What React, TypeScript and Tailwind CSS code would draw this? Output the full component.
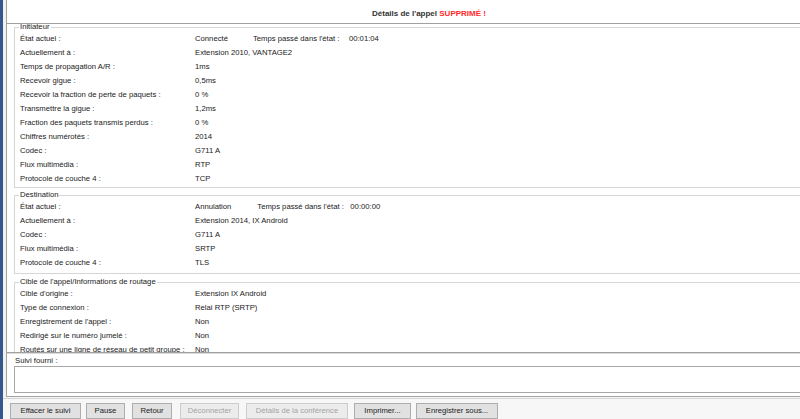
import React from "react";

type Row = { label: string; value: string; extra?: { label: string; value: string; gap: string; width: string } };

const initiateur: Row[] = [
  {
    label: "État actuel :",
    value: "Connecté",
    extra: { label: "Temps passé dans l'état :", value: "00:01:04", gap: "ml-[25px]", width: "w-[96px]" },
  },
  { label: "Actuellement à :", value: "Extension 2010, VANTAGE2" },
  { label: "Temps de propagation A/R :", value: "1ms" },
  { label: "Recevoir gigue :", value: "0,5ms" },
  { label: "Recevoir la fraction de perte de paquets :", value: "0 %" },
  { label: "Transmettre la gigue :", value: "1,2ms" },
  { label: "Fraction des paquets transmis perdus :", value: "0 %" },
  { label: "Chiffres numérotés :", value: "2014" },
  { label: "Codec :", value: "G711 A" },
  { label: "Flux multimédia :", value: "RTP" },
  { label: "Protocole de couche 4 :", value: "TCP" },
];

const destination: Row[] = [
  {
    label: "État actuel :",
    value: "Annulation",
    extra: { label: "Temps passé dans l'état :", value: "00:00:00", gap: "ml-[26px]", width: "w-[93px]" },
  },
  { label: "Actuellement à :", value: "Extension 2014, IX Android" },
  { label: "Codec :", value: "G711 A" },
  { label: "Flux multimédia :", value: "SRTP" },
  { label: "Protocole de couche 4 :", value: "TLS" },
];

const routage: Row[] = [
  { label: "Cible d'origine :", value: "Extension IX Android" },
  { label: "Type de connexion :", value: "Relai RTP (SRTP)" },
  { label: "Enregistrement de l'appel :", value: "Non" },
  { label: "Redirigé sur le numéro jumelé :", value: "Non" },
  { label: "Routés sur une ligne de réseau de petit groupe :", value: "Non" },
];

function Group({ title, rows, className }: { title: string; rows: Row[]; className: string }) {
  return (
    <fieldset className={`ml-[7px] w-[800px] border border-[#d6d6d6] ${className}`}>
      <legend className="ml-[4px] px-[1px] leading-[10px]">{title}</legend>
      {rows.map((row) => (
        <div key={row.label} className="flex h-[14px] items-center pl-[5px] leading-[14px]">
          <span className="w-[175px] shrink-0 whitespace-nowrap">{row.label}</span>
          <span className="whitespace-nowrap">{row.value}</span>
          {row.extra && (
            <>
              <span className={`${row.extra.gap} ${row.extra.width} whitespace-nowrap`}>{row.extra.label}</span>
              <span className="whitespace-nowrap">{row.extra.value}</span>
            </>
          )}
        </div>
      ))}
    </fieldset>
  );
}

const buttons = [
  { label: "Effacer le suivi", cls: "ml-0 w-[71px]", disabled: false },
  { label: "Pause", cls: "ml-[5px] w-[39px]", disabled: false },
  { label: "Retour", cls: "ml-[7px] w-[40px]", disabled: false },
  { label: "Déconnecter", cls: "ml-[8px] w-[59px]", disabled: true },
  { label: "Détails de la conférence", cls: "ml-[7px] w-[102px]", disabled: true },
  { label: "Imprimer...", cls: "ml-[6px] w-[57px]", disabled: false },
  { label: "Enregistrer sous...", cls: "ml-[5px] w-[82px]", disabled: false },
];

export default function App() {
  return (
    <div className="flex h-[419px] w-[800px] overflow-hidden bg-white font-['Liberation_Sans',Arial,sans-serif] text-[7.7px] text-[#1a1a1a]">
      <div className="w-[3px] shrink-0 bg-[#34588c]" />
      <div className="flex min-w-0 flex-1 flex-col">
        <div className="flex h-[397px] shrink-0 bg-[#f1f1f1] pl-[3px]">
          <div className="flex min-w-0 flex-1 flex-col border-b border-l border-[#a3a3a3] bg-white">
            {/* header */}
            <div className="flex h-[24px] shrink-0 items-end border-b border-[#a0a0a0] pb-[4px] pl-[365px]">
              <span className="whitespace-nowrap text-[8px] font-bold leading-[10px] text-[#333]">
                Détails de l'appel <span className="text-[#ff2a2a]">SUPPRIMÉ !</span>
              </span>
            </div>

            {/* scrolled details */}
            <div className="h-[329px] shrink-0 overflow-hidden border-b border-[#a0a0a0]">
              <Group title="Initiateur" rows={initiateur} className="-mt-[2px] pb-[1px]" />
              <Group title="Destination" rows={destination} className="mt-[2px] pb-[3px]" />
              <Group title="Cible de l'appel/Informations de routage" rows={routage} className="mt-[3px]" />
            </div>
            <div className="h-px shrink-0 bg-[#dcdcdc]" />

            {/* suivi */}
            <div className="flex flex-1 flex-col pt-[2px] pb-[3px]">
              <div className="pl-[8px] leading-[10px]">Suivi fourni :</div>
              <div className="ml-[7px] h-[27px] border-y border-l border-[#a7a7a7] bg-white" />
            </div>
          </div>
        </div>

        {/* buttons */}
        <div className="flex-1 bg-[#f7f7f7] pt-[1px]">
          <div className="flex h-full items-start border-t border-[#d4d4d4] pl-[7px] pt-[4px]">
            {buttons.map((b) => (
              <div
                key={b.label}
                className={`${b.cls} flex h-[16px] shrink-0 items-center justify-center whitespace-nowrap border ${
                  b.disabled
                    ? "border-[#cccccc] bg-[#ececec] text-[#a3a3a3]"
                    : "border-[#adadad] bg-[#e1e1e1] text-[#1a1a1a]"
                }`}
              >
                {b.label}
              </div>
            ))}
          </div>
        </div>
      </div>
    </div>
  );
}
